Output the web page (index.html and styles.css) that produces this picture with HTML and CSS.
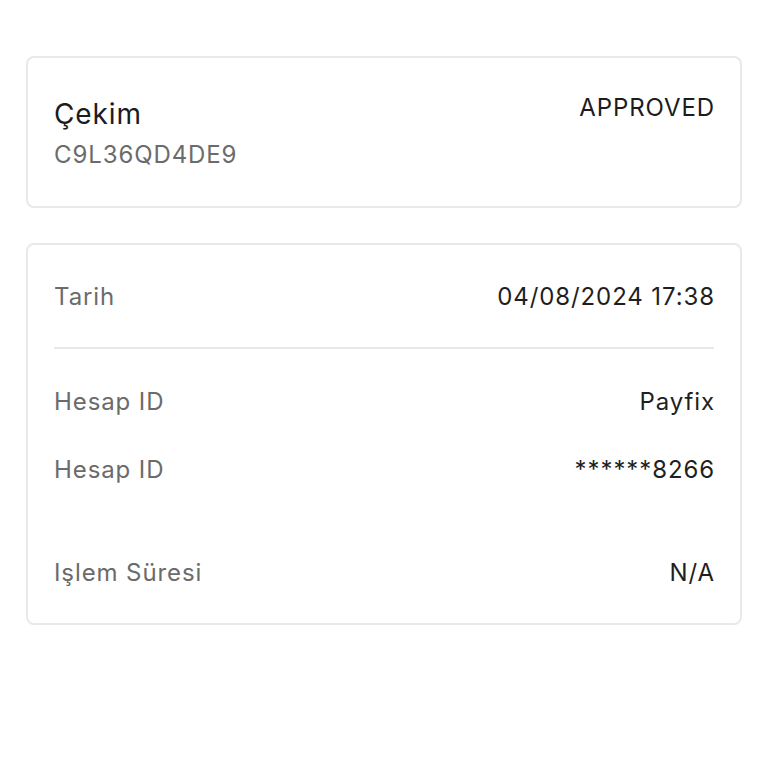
FILE: index.html
```html
<!DOCTYPE html>
<html lang="tr">
<head>
<meta charset="utf-8">
<title>Çekim</title>
<link rel="stylesheet" href="styles.css">
</head>
<body>
<main class="page">
  <section class="card header-card">
    <div class="header-main">
      <div class="title">Çekim</div>
      <div class="subtitle">C9L36QD4DE9</div>
    </div>
    <div class="status">APPROVED</div>
  </section>
  <section class="card details-card">
    <div class="row"><span class="label">Tarih</span><span class="value">04/08/2024 17:38</span></div>
    <div class="divider"></div>
    <div class="row row-first"><span class="label">Hesap ID</span><span class="value">Payfix</span></div>
    <div class="row row-next"><span class="label">Hesap ID</span><span class="value">******8266</span></div>
    <div class="row row-spaced"><span class="label">Işlem Süresi</span><span class="value">N/A</span></div>
  </section>
</main>
</body>
</html>
```
FILE: styles.css
```css
html, body {
  margin: 0;
  padding: 0;
  background: #ffffff;
}
body {
  font-family: Inter, "Noto Sans", sans-serif;
  color: #1f1f1f;
  letter-spacing: 0.9px;
}
.page {
  padding: 56px 26px 0 26px;
  display: flex;
  flex-direction: column;
  gap: 35px;
}
.card {
  border: 2px solid #e9e9e9;
  border-radius: 8px;
  background: #fff;
}
.header-card {
  padding: 36px 26px 36px 26px;
  display: flex;
  justify-content: space-between;
  align-items: flex-start;
}
.title {
  font-size: 28px;
  line-height: 40px;
  color: #1c1c1c;
}
.subtitle {
  margin-top: 6px;
  font-size: 24px;
  line-height: 30px;
  color: #6b6b6b;
}
.status {
  font-size: 24px;
  line-height: 28px;
  color: #1c1c1c;
  margin-right: -1px;
}
.details-card {
  padding: 28px 26px 28px 26px;
  display: flex;
  flex-direction: column;
}
.row {
  display: flex;
  justify-content: space-between;
  align-items: center;
  height: 46px;
}
.label {
  font-size: 24px;
  color: #6b6b6b;
}
.value {
  font-size: 24px;
  color: #1f1f1f;
  margin-right: -1px;
}
.divider {
  margin-top: 28px;
  height: 2px;
  background: #e9e9e9;
}
.row-first { margin-top: 29px; }
.row-next { margin-top: 22px; }
.row-spaced { margin-top: 57px; }
```
